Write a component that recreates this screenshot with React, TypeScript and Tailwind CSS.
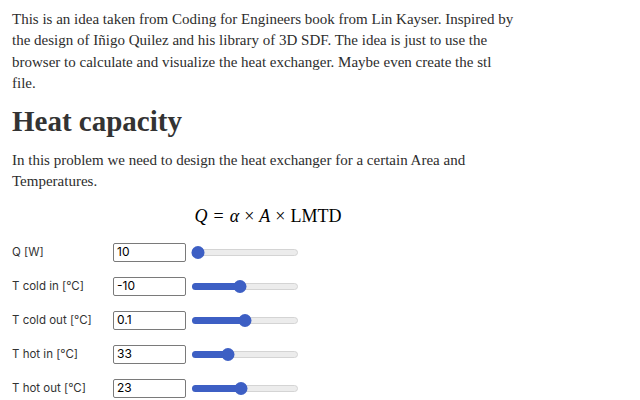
import React from "react";

const serif = { fontFamily: '"Liberation Serif", "DejaVu Serif", serif' };
const sans = { fontFamily: 'Inter, "Liberation Sans", sans-serif' };

interface Param {
    label: string;
    value: string;
    fill: number;
}

const params: Param[] = [
    { label: "Q [W]", value: "10", fill: 0 },
    { label: "T cold in [°C]", value: "-10", fill: 0.45 },
    { label: "T cold out [°C]", value: "0.1", fill: 0.5 },
    { label: "T hot in [°C]", value: "33", fill: 0.32 },
    { label: "T hot out [°C]", value: "23", fill: 0.46 },
];

const Slider: React.FC<{ fill: number }> = ({ fill }) => {
    // thumb travel: track is 106px, thumb 13px
    const left = 6 + fill * 94;
    return (
        <div className="relative w-[106px] h-[13px] flex items-center">
            <div className="w-full h-[7px] rounded-full bg-[#ececec] border border-[#d4d4d4]" />
            <div
                className="absolute h-[7px] rounded-full bg-[#3d5fc4] left-0"
                style={{ width: left }}
            />
            <div
                className="absolute w-[13px] h-[13px] rounded-full bg-[#3d5fc4] -translate-x-1/2"
                style={{ left }}
            />
        </div>
    );
};

export default function App() {
    return (
        <div className="bg-white w-[640px] h-[400px] overflow-hidden text-[#333]">
            <div className="w-[530px] pl-3 pt-[9px]">
                <p className="text-[15px] leading-[21.3px] text-[#2d2d2d]" style={serif}>
                    This is an idea taken from Coding for Engineers book from Lin Kayser. Inspired by
                    <br />
                    the design of Iñigo Quilez and his library of 3D SDF. The idea is just to use the
                    <br />
                    browser to calculate and visualize the heat exchanger. Maybe even create the stl
                    <br />
                    file.
                </p>

                <h2 className="text-[29px] font-bold leading-[36px] mt-[9px] text-[#333]" style={serif}>
                    Heat capacity
                </h2>

                <p className="text-[15px] leading-[21.3px] mt-[11px] text-[#2d2d2d]" style={serif}>
                    In this problem we need to design the heat exchanger for a certain Area and
                    <br />
                    Temperatures.
                </p>

                <div className="flex justify-center w-[512px] mt-[11px] text-[18px] leading-[24px] text-black" style={serif}>
                    <span className="italic">Q</span>
                    <span className="mx-[6px]">=</span>
                    <span className="italic">α</span>
                    <span className="mx-[5px]">×</span>
                    <span className="italic">A</span>
                    <span className="mx-[5px]">×</span>
                    <span>LMTD</span>
                </div>

                <div className="flex flex-col mt-[15px] gap-[15px]">
                    {params.map((p) => (
                        <div key={p.label} className="flex items-center h-[19px]">
                            <p className="w-[101px] text-[11.5px] text-[#333]" style={sans}>
                                {p.label}
                            </p>
                            <div
                                className="w-[73px] h-[19px] border border-[#7a7a7a] rounded-[2px] px-[3px] flex items-center text-[12px] text-black"
                                style={sans}
                            >
                                {p.value}
                            </div>
                            <div className="ml-[6px]">
                                <Slider fill={p.fill} />
                            </div>
                        </div>
                    ))}
                </div>
            </div>
        </div>
    );
}
